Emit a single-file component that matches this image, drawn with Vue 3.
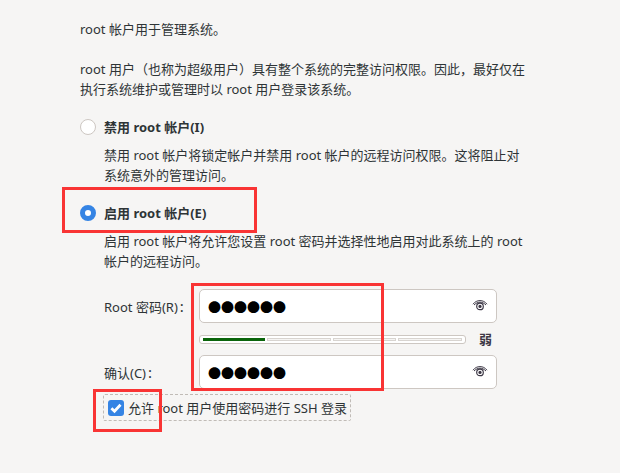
<script setup>
const dots = '●●●●●●'
</script>

<template>
  <div class="page">
    <p class="intro">root 帐户用于管理系统。</p>
    <p class="desc">root 用户（也称为超级用户）具有整个系统的完整访问权限。因此，最好仅在<br />执行系统维护或管理时以 root 用户登录该系统。</p>

    <div class="radio-row radio-row--first">
      <span class="radio"></span>
      <span class="radio-label">禁用 root 帐户(I)</span>
    </div>
    <p class="hint">禁用 root 帐户将锁定帐户并禁用 root 帐户的远程访问权限。这将阻止对<br />系统意外的管理访问。</p>

    <div class="radio-row radio-row--second">
      <span class="radio radio--on"></span>
      <span class="radio-label">启用 root 帐户(E)</span>
    </div>
    <p class="hint">启用 root 帐户将允许您设置 root 密码并选择性地启用对此系统上的 root<br />帐户的远程访问。</p>

    <div class="form">
      <label class="form__label">Root 密码(R)<span class="form__colon">:</span></label>
      <div class="entry">
        <span class="entry__dots">{{ dots }}</span>
        <svg class="eye" viewBox="0 0 16 16" width="16" height="16">
          <path d="M1 6.2C3 3.6 5.4 2.6 8 2.6s5 1 7 3.6M2 7C4 5 6 4.2 8 4.2s4 .8 6 2.8" fill="none" stroke="#3d3846" stroke-width="1" />
          <circle cx="8" cy="8.4" r="3.3" fill="none" stroke="#3d3846" stroke-width="1.2" />
          <circle cx="8" cy="8.4" r="1.6" fill="#3d3846" />
        </svg>
      </div>

      <div class="strength">
        <div class="meter">
          <span class="meter__seg meter__seg--on"></span>
          <span class="meter__seg"></span>
          <span class="meter__seg"></span>
          <span class="meter__seg"></span>
        </div>
        <span class="strength__text">弱</span>
      </div>

      <label class="form__label">确认(C)<span class="form__colon">:</span></label>
      <div class="entry">
        <span class="entry__dots">{{ dots }}</span>
        <svg class="eye" viewBox="0 0 16 16" width="16" height="16">
          <path d="M1 6.2C3 3.6 5.4 2.6 8 2.6s5 1 7 3.6M2 7C4 5 6 4.2 8 4.2s4 .8 6 2.8" fill="none" stroke="#3d3846" stroke-width="1" />
          <circle cx="8" cy="8.4" r="3.3" fill="none" stroke="#3d3846" stroke-width="1.2" />
          <circle cx="8" cy="8.4" r="1.6" fill="#3d3846" />
        </svg>
      </div>
    </div>

    <div class="check-row">
      <span class="check">
        <svg viewBox="0 0 16 16" width="16" height="16">
          <path d="M3.4 8.2l3.1 3 6-6.4" fill="none" stroke="#fff" stroke-width="2.8" />
        </svg>
      </span>
      <span>允许 root 用户使用密码进行 SSH 登录</span>
    </div>

    <div class="mark mark--radio"></div>
    <div class="mark mark--fields"></div>
    <div class="mark mark--check"></div>
  </div>
</template>

<style>
html,
body {
  margin: 0;
  background: #f6f5f4;
}
</style>

<style scoped>
.page {
  position: relative;
  width: 620px;
  height: 473px;
  box-sizing: border-box;
  padding: 19px 0 0 80px;
  overflow: hidden;
  background: #f6f5f4;
  color: #2e3436;
  font-family: "Noto Sans", "Noto Sans CJK SC", sans-serif;
  font-size: 13px;
  line-height: 20px;
}

p {
  margin: 0;
}

.desc {
  margin-top: 20px;
}

.radio-row {
  display: flex;
  align-items: center;
  gap: 8px;
  height: 20px;
  font-weight: 700;
}

.radio-row--first {
  margin-top: 18px;
}

.radio-row--second {
  margin-top: 18px;
}

.radio {
  width: 14px;
  height: 14px;
  border: 1px solid #cdc7c2;
  border-radius: 50%;
  background: #fff;
}

.radio--on {
  width: 6px;
  height: 6px;
  border: 5px solid #3584e4;
}

.hint {
  margin: 8px 0 0 24px;
}

.form {
  display: grid;
  grid-template-columns: 95px 298px;
  align-items: center;
  margin: 18px 0 0 24px;
}

.form__label {
  padding-top: 1px;
  white-space: nowrap;
}

.form__colon {
  margin-left: 2px;
  font-size: 15px;
  line-height: 1;
}

.entry {
  display: flex;
  align-items: center;
  justify-content: space-between;
  box-sizing: border-box;
  height: 34px;
  padding: 0 8px;
  border: 1px solid #cdc7c2;
  border-radius: 5px;
  background: #fff;
}

.entry__dots {
  padding-top: 2px;
  color: #000;
  font-size: 13px;
}

.strength {
  grid-column: 2;
  display: flex;
  align-items: center;
  justify-content: space-between;
  height: 32px;
}

.meter {
  display: flex;
  gap: 2px;
  box-sizing: border-box;
  width: 267px;
  height: 9px;
  padding: 2px 3px;
  border: 1px solid #cdc7c2;
  border-radius: 3px;
  background: #fff;
}

.meter__seg {
  flex: 1;
  border: 1px solid #d8d4d0;
  background: #f6f5f4;
}

.meter__seg--on {
  border: 0;
  background: #0a640a;
}

.strength__text {
  margin-right: 5px;
  font-weight: 700;
  color: #3d3846;
}

.check-row {
  display: flex;
  align-items: center;
  gap: 4px;
  box-sizing: border-box;
  width: fit-content;
  height: 27px;
  margin: 5px 0 0 23px;
  padding: 0 3px 0 4px;
  border: 1px dashed #c0bbb6;
  border-radius: 2px;
}

.check {
  display: block;
  width: 16px;
  height: 16px;
  border-radius: 3px;
  background: #3584e4;
}

.check svg {
  display: block;
}

.mark {
  position: absolute;
  box-sizing: border-box;
  border: 3px solid #f93434;
}

.mark--radio {
  left: 62px;
  top: 187px;
  width: 195px;
  height: 46px;
}

.mark--fields {
  left: 191px;
  top: 283px;
  width: 193px;
  height: 108px;
}

.mark--check {
  left: 93px;
  top: 389px;
  width: 69px;
  height: 43px;
}
</style>
